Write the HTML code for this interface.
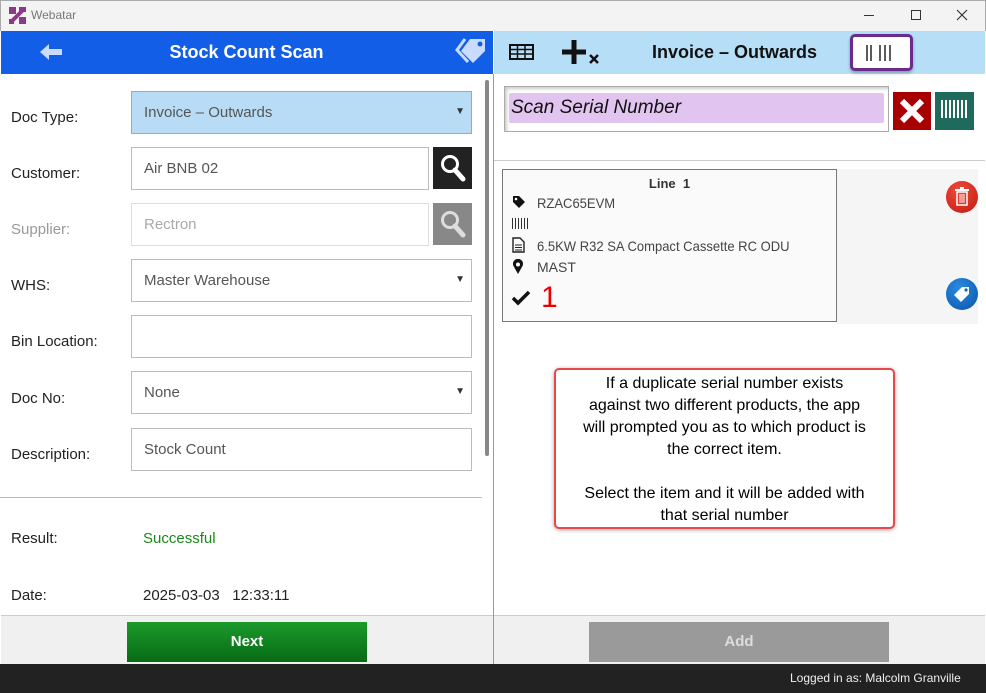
<!DOCTYPE html>
<html><head><meta charset="utf-8"><style>
*{box-sizing:border-box;margin:0;padding:0}
body{width:986px;height:693px;overflow:hidden;font-family:"Liberation Sans",Arial,sans-serif;background:#fff;position:relative}
.a{position:absolute}
.lbl{position:absolute;left:11px;font-size:15px;color:#222}
.inp{position:absolute;left:131px;width:341px;height:43px;border:1px solid #bbb;font-size:15px;color:#555;padding:12px 0 0 12px;background:#fff}
.caret{position:absolute;right:6px;top:14px;font-size:10px;color:#333}
</style></head><body>
<div class="a" style="left:0;top:0;width:986px;height:31px;background:#f3f3f3;border:1px solid #aaa;border-bottom:none"></div>
<svg class="a" style="left:9px;top:7px" width="17" height="17" viewBox="0 0 17 17"><rect x="0" y="0" width="7" height="7" fill="#8b3a84"/><rect x="10" y="10" width="7" height="7" fill="#8b3a84"/><path d="M3 14 L14 3" stroke="#8b3a84" stroke-width="4"/><rect x="10" y="0" width="7" height="5" fill="#8b3a84"/><rect x="0" y="12" width="5" height="5" fill="#8b3a84"/></svg>
<div class="a" style="left:31px;top:8px;font-size:12px;color:#777">Webatar</div>
<div class="a" style="left:864px;top:15px;width:10px;height:1px;background:#333"></div>
<div class="a" style="left:911px;top:10px;width:10px;height:10px;border:1px solid #333"></div>
<svg class="a" style="left:956px;top:9px" width="12" height="12"><path d="M1 1L11 11M11 1L1 11" stroke="#333" stroke-width="1.2"/></svg>
<!-- left header -->
<div class="a" style="left:1px;top:31px;width:492px;height:43px;background:#135ee6"></div>
<svg class="a" style="left:40px;top:44px" width="22" height="16"><path d="M0 8L9 0V5H22V11H9V16Z" fill="#c9dcff"/></svg>
<div class="a" style="left:0;top:42px;width:493px;text-align:center;font-size:18px;font-weight:bold;color:#fff">Stock Count Scan</div>
<svg class="a" style="left:455px;top:37px" width="34" height="28" viewBox="0 0 34 28"><path d="M15 2 H30 V14 L18 26 L6 14 Z" fill="#c9dcff"/><circle cx="25" cy="7" r="2.5" fill="#135ee6"/><path d="M10 2 L2 13 L13 25" stroke="#c9dcff" stroke-width="3" fill="none"/></svg>
<!-- right header -->
<div class="a" style="left:494px;top:31px;width:491px;height:43px;background:#b7def7"></div>
<svg class="a" style="left:509px;top:44px" width="25" height="16" viewBox="0 0 25 16"><rect x="1" y="1" width="23" height="14" fill="none" stroke="#111" stroke-width="2"/><path d="M1 5.5H24M1 10H24M8.5 1V15M16 1V15" stroke="#111" stroke-width="1.5"/></svg>
<svg class="a" style="left:562px;top:40px" width="38" height="24"><path d="M12 0V24M0 12H24" stroke="#111" stroke-width="5"/><path d="M28 15L36 23M36 15L28 23" stroke="#111" stroke-width="2.5"/></svg>
<div class="a" style="left:652px;top:42px;font-size:18px;font-weight:bold;color:#111">Invoice – Outwards</div>
<div class="a" style="left:850px;top:34px;width:63px;height:37px;background:#fff;border:3px solid #6a2a8e;border-radius:5px;box-shadow:0 2px 3px rgba(0,0,0,.3)"></div>
<svg class="a" style="left:866px;top:44px" width="32" height="18"><path d="M1 1V17M5 1V17M14 1V17M19 1V17M24 1V17" stroke="#333" stroke-width="1.6"/></svg>
<div class="a" style="left:493px;top:74px;width:1px;height:590px;background:#999"></div>
<!-- left form -->
<div class="lbl" style="top:109px">Doc Type:</div>
<div class="inp" style="top:91px;background:#b9dcf6;border-color:#9ab">Invoice – Outwards<span class="caret">▼</span></div>
<div class="lbl" style="top:165px">Customer:</div>
<div class="inp" style="top:147px;width:298px">Air BNB 02</div>
<div class="a" style="left:433px;top:147px;width:39px;height:42px;background:#222"></div>
<svg class="a" style="left:439px;top:153px" width="28" height="30"><circle cx="11" cy="11" r="7.5" stroke="#fff" stroke-width="3" fill="none"/><path d="M16 17 L24 26" stroke="#fff" stroke-width="5" stroke-linecap="round"/></svg>
<div class="lbl" style="top:221px;color:#999">Supplier:</div>
<div class="inp" style="top:203px;width:298px;color:#aaa;border-color:#ddd">Rectron</div>
<div class="a" style="left:433px;top:203px;width:39px;height:42px;background:#888"></div>
<svg class="a" style="left:439px;top:209px" width="28" height="30"><circle cx="11" cy="11" r="7.5" stroke="#ddd" stroke-width="3" fill="none"/><path d="M16 17 L24 26" stroke="#ddd" stroke-width="5" stroke-linecap="round"/></svg>
<div class="lbl" style="top:277px">WHS:</div>
<div class="inp" style="top:259px">Master Warehouse<span class="caret">▼</span></div>
<div class="lbl" style="top:333px">Bin Location:</div>
<div class="inp" style="top:315px"></div>
<div class="lbl" style="top:390px">Doc No:</div>
<div class="inp" style="top:371px">None<span class="caret">▼</span></div>
<div class="lbl" style="top:446px">Description:</div>
<div class="inp" style="top:428px">Stock Count</div>
<div class="a" style="left:485px;top:80px;width:4px;height:376px;background:#888;border-radius:2px"></div>
<div class="a" style="left:0;top:497px;width:482px;height:1px;background:#bbb"></div>
<div class="lbl" style="top:530px">Result:</div>
<div class="a" style="left:143px;top:530px;font-size:15px;color:#1a8a1a">Successful</div>
<div class="lbl" style="top:587px">Date:</div>
<div class="a" style="left:143px;top:587px;font-size:15px;color:#222">2025-03-03 &nbsp;&nbsp;12:33:11</div>
<!-- right scan -->
<div class="a" style="left:504px;top:86px;width:385px;height:46px;border:1px solid #aaa;box-shadow:inset 2px 2px 3px #ccc"></div>
<div class="a" style="left:509px;top:93px;width:375px;height:30px;background:#e2c4f0;border-radius:2px;font-style:italic;font-size:19px;padding:4px 2px;color:#111">Scan Serial Number</div>
<div class="a" style="left:893px;top:92px;width:38px;height:38px;background:#a80000"></div>
<svg class="a" style="left:899px;top:98px" width="26" height="26"><path d="M3 3L23 23M23 3L3 23" stroke="#fff" stroke-width="6"/></svg>
<div class="a" style="left:935px;top:92px;width:39px;height:38px;background:#1e6a5c"></div>
<div class="a" style="left:941px;top:100px;width:27px;height:18px;background:repeating-linear-gradient(90deg,#fff 0 2px,transparent 2px 4px)"></div>
<div class="a" style="left:494px;top:160px;width:491px;height:1px;background:#ccc"></div>
<!-- card -->
<div class="a" style="left:836px;top:169px;width:142px;height:155px;background:#f5f5f5"></div>
<div class="a" style="left:502px;top:169px;width:335px;height:153px;border:1px solid #777;background:#fafafa"></div>
<div class="a" style="left:502px;top:176px;width:335px;text-align:center;font-size:13px;font-weight:bold;color:#333">Line &nbsp;1</div>
<svg class="a" style="left:512px;top:195px" width="14" height="14"><path d="M1 1H7L13 7L7 13L1 7Z" fill="#111"/><circle cx="4" cy="4" r="1.3" fill="#fff"/></svg>
<div class="a" style="left:537px;top:195px;font-size:14px;color:#444;transform:scaleX(.93);transform-origin:left">RZAC65EVM</div>
<div class="a" style="left:512px;top:218px;width:16px;height:11px;background:repeating-linear-gradient(90deg,#333 0 1px,transparent 1px 3px)"></div>
<svg class="a" style="left:512px;top:237px" width="13" height="16"><path d="M1 1H8L12 5V15H1Z" fill="none" stroke="#222" stroke-width="1.4"/><path d="M3 8H10M3 10.5H10M3 13H10" stroke="#222"/></svg>
<div class="a" style="left:537px;top:238px;font-size:14px;color:#444;transform:scaleX(.93);transform-origin:left">6.5KW R32 SA Compact Cassette RC ODU</div>
<svg class="a" style="left:512px;top:259px" width="12" height="16"><path d="M6 15 L1.5 7 A5 5 0 1 1 10.5 7 Z" fill="#111"/><circle cx="6" cy="5.5" r="2" fill="#fff"/></svg>
<div class="a" style="left:537px;top:259px;font-size:14px;color:#444">MAST</div>
<svg class="a" style="left:511px;top:290px" width="20" height="16"><path d="M2 8L7 13L18 2" stroke="#111" stroke-width="3.5" fill="none"/></svg>
<div class="a" style="left:541px;top:281px;font-size:30px;color:#e00">1</div>
<div class="a" style="left:946px;top:181px;width:32px;height:32px;border-radius:50%;background:radial-gradient(circle at 40% 30%,#f04a3a,#c01a10)"></div>
<svg class="a" style="left:954px;top:187px" width="16" height="20"><rect x="1" y="2" width="14" height="2" fill="#fff"/><rect x="6" y="0" width="4" height="2" fill="#fff"/><path d="M3 5H13V18H3Z" fill="none" stroke="#fff" stroke-width="1.5"/><path d="M6 7V16M8 7V16M10 7V16" stroke="#fff"/></svg>
<div class="a" style="left:946px;top:278px;width:32px;height:32px;border-radius:50%;background:radial-gradient(circle at 40% 30%,#2a8ae0,#0a55a8)"></div>
<svg class="a" style="left:952px;top:284px" width="20" height="20"><path d="M10 3H17V10L9 18L2 11Z" fill="#fff"/><circle cx="14" cy="6" r="1.6" fill="#1565c0"/></svg>
<!-- callout -->
<div class="a" style="left:554px;top:368px;width:341px;height:161px;border:2px solid #e8484a;border-radius:5px;background:#fff;box-shadow:0 1px 4px rgba(0,0,0,.35);font-size:16px;color:#000;text-align:center;line-height:22px;padding:3px 0;white-space:nowrap">If a duplicate serial number exists<br>against two different products, the app<br>will prompted you as to which product is<br>the correct item.<br><br>Select the item and it will be added with<br>that serial number</div>
<!-- footer -->
<div class="a" style="left:1px;top:615px;width:492px;height:49px;background:#f0f0f0;border-top:1px solid #ccc"></div>
<div class="a" style="left:494px;top:615px;width:491px;height:49px;background:#f0f0f0;border-top:1px solid #ccc"></div>
<div class="a" style="left:127px;top:622px;width:240px;height:40px;background:linear-gradient(#1b9a2c,#086b14);color:#fff;font-weight:bold;font-size:15px;text-align:center;line-height:40px">Next</div>
<div class="a" style="left:589px;top:622px;width:300px;height:40px;background:#9a9a9a;color:#ddd;font-weight:bold;font-size:15px;text-align:center;line-height:40px">Add</div>
<div class="a" style="left:0;top:664px;width:986px;height:29px;background:#222"></div>
<div class="a" style="left:790px;top:671px;font-size:12px;color:#eee">Logged in as: Malcolm Granville</div>
</body></html>
